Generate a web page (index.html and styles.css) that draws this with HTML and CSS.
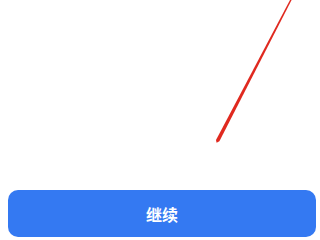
FILE: index.html
```html
<!DOCTYPE html>
<html lang="zh">
<head>
<meta charset="utf-8">
<link rel="stylesheet" href="styles.css">
</head>
<body>
<div class="screen">
  <div class="canvas">
    <svg class="stroke" viewBox="0 0 320 190" width="320" height="190">
      <polygon points="290,0 291.6,0 219.4,141.2 216.6,142.8 216,140" fill="#e0291f"/>
    </svg>
  </div>
  <div class="footer">
    <button class="btn">继续</button>
  </div>
</div>
</body>
</html>
```
FILE: styles.css
```css
html, body {
  margin: 0;
  padding: 0;
  background: #ffffff;
}
.screen {
  width: 320px;
  height: 240px;
  display: flex;
  flex-direction: column;
}
.canvas {
  height: 190px;
}
.stroke {
  display: block;
}
.footer {
  padding: 0 4px 3px 8px;
}
.btn {
  display: block;
  width: 100%;
  height: 47px;
  border: none;
  border-radius: 10px;
  background: #3479f2;
  color: #ffffff;
  font-family: "Noto Sans CJK SC", "Noto Sans", sans-serif;
  font-size: 16px;
  font-weight: 700;
  padding: 0;
}
```
